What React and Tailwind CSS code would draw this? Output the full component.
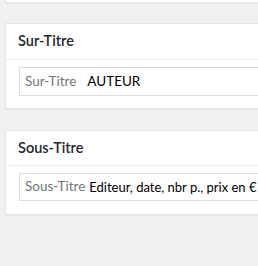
export default function App() {
  const font = { fontFamily: 'Lato, "Open Sans", sans-serif' };
  return (
    <div className="w-[258px] h-[266px] overflow-hidden bg-[#f1f1f1]" style={font}>
      <div className="pl-[5px]">
        <div className="h-[3px] w-[300px] bg-white border-b border-l border-[#e5e5e5] shadow-[0_1px_1px_rgba(0,0,0,0.04)]" />
        <div className="mt-[20px] w-[300px] bg-white border border-[#e5e5e5] shadow-[0_1px_1px_rgba(0,0,0,0.04)]">
          <div className="h-[36px] flex items-center pl-[12px] border-b border-[#eeeeee]">
            <span className="text-[14.5px] font-semibold text-[#23282d] leading-none">Sur-Titre</span>
          </div>
          <div className="pt-[7px] pb-[12px] pl-[13px]">
            <div className="h-[29px] border border-[#dddddd] flex items-center pl-[5px] text-[13.5px] leading-none whitespace-nowrap">
              <span className="text-[#72777c]">Sur-Titre</span>
              <span className="ml-[11px] text-[#000]">AUTEUR</span>
            </div>
          </div>
        </div>
        <div className="mt-[21px] w-[300px] bg-white border border-[#e5e5e5] shadow-[0_1px_1px_rgba(0,0,0,0.04)]">
          <div className="h-[35px] flex items-center pl-[12px] border-b border-[#eeeeee]">
            <span className="text-[14.5px] font-semibold text-[#23282d] leading-none">Sous-Titre</span>
          </div>
          <div className="pt-[7px] pb-[13px] pl-[13px]">
            <div className="h-[28px] border border-[#dddddd] flex items-center pl-[5px] text-[13px] leading-none whitespace-nowrap">
              <span className="text-[#72777c] text-[13.5px]">Sous-Titre</span>
              <span className="ml-[4px] text-[#000]">Editeur, date, nbr p., prix en €</span>
            </div>
          </div>
        </div>
      </div>
    </div>
  );
}
